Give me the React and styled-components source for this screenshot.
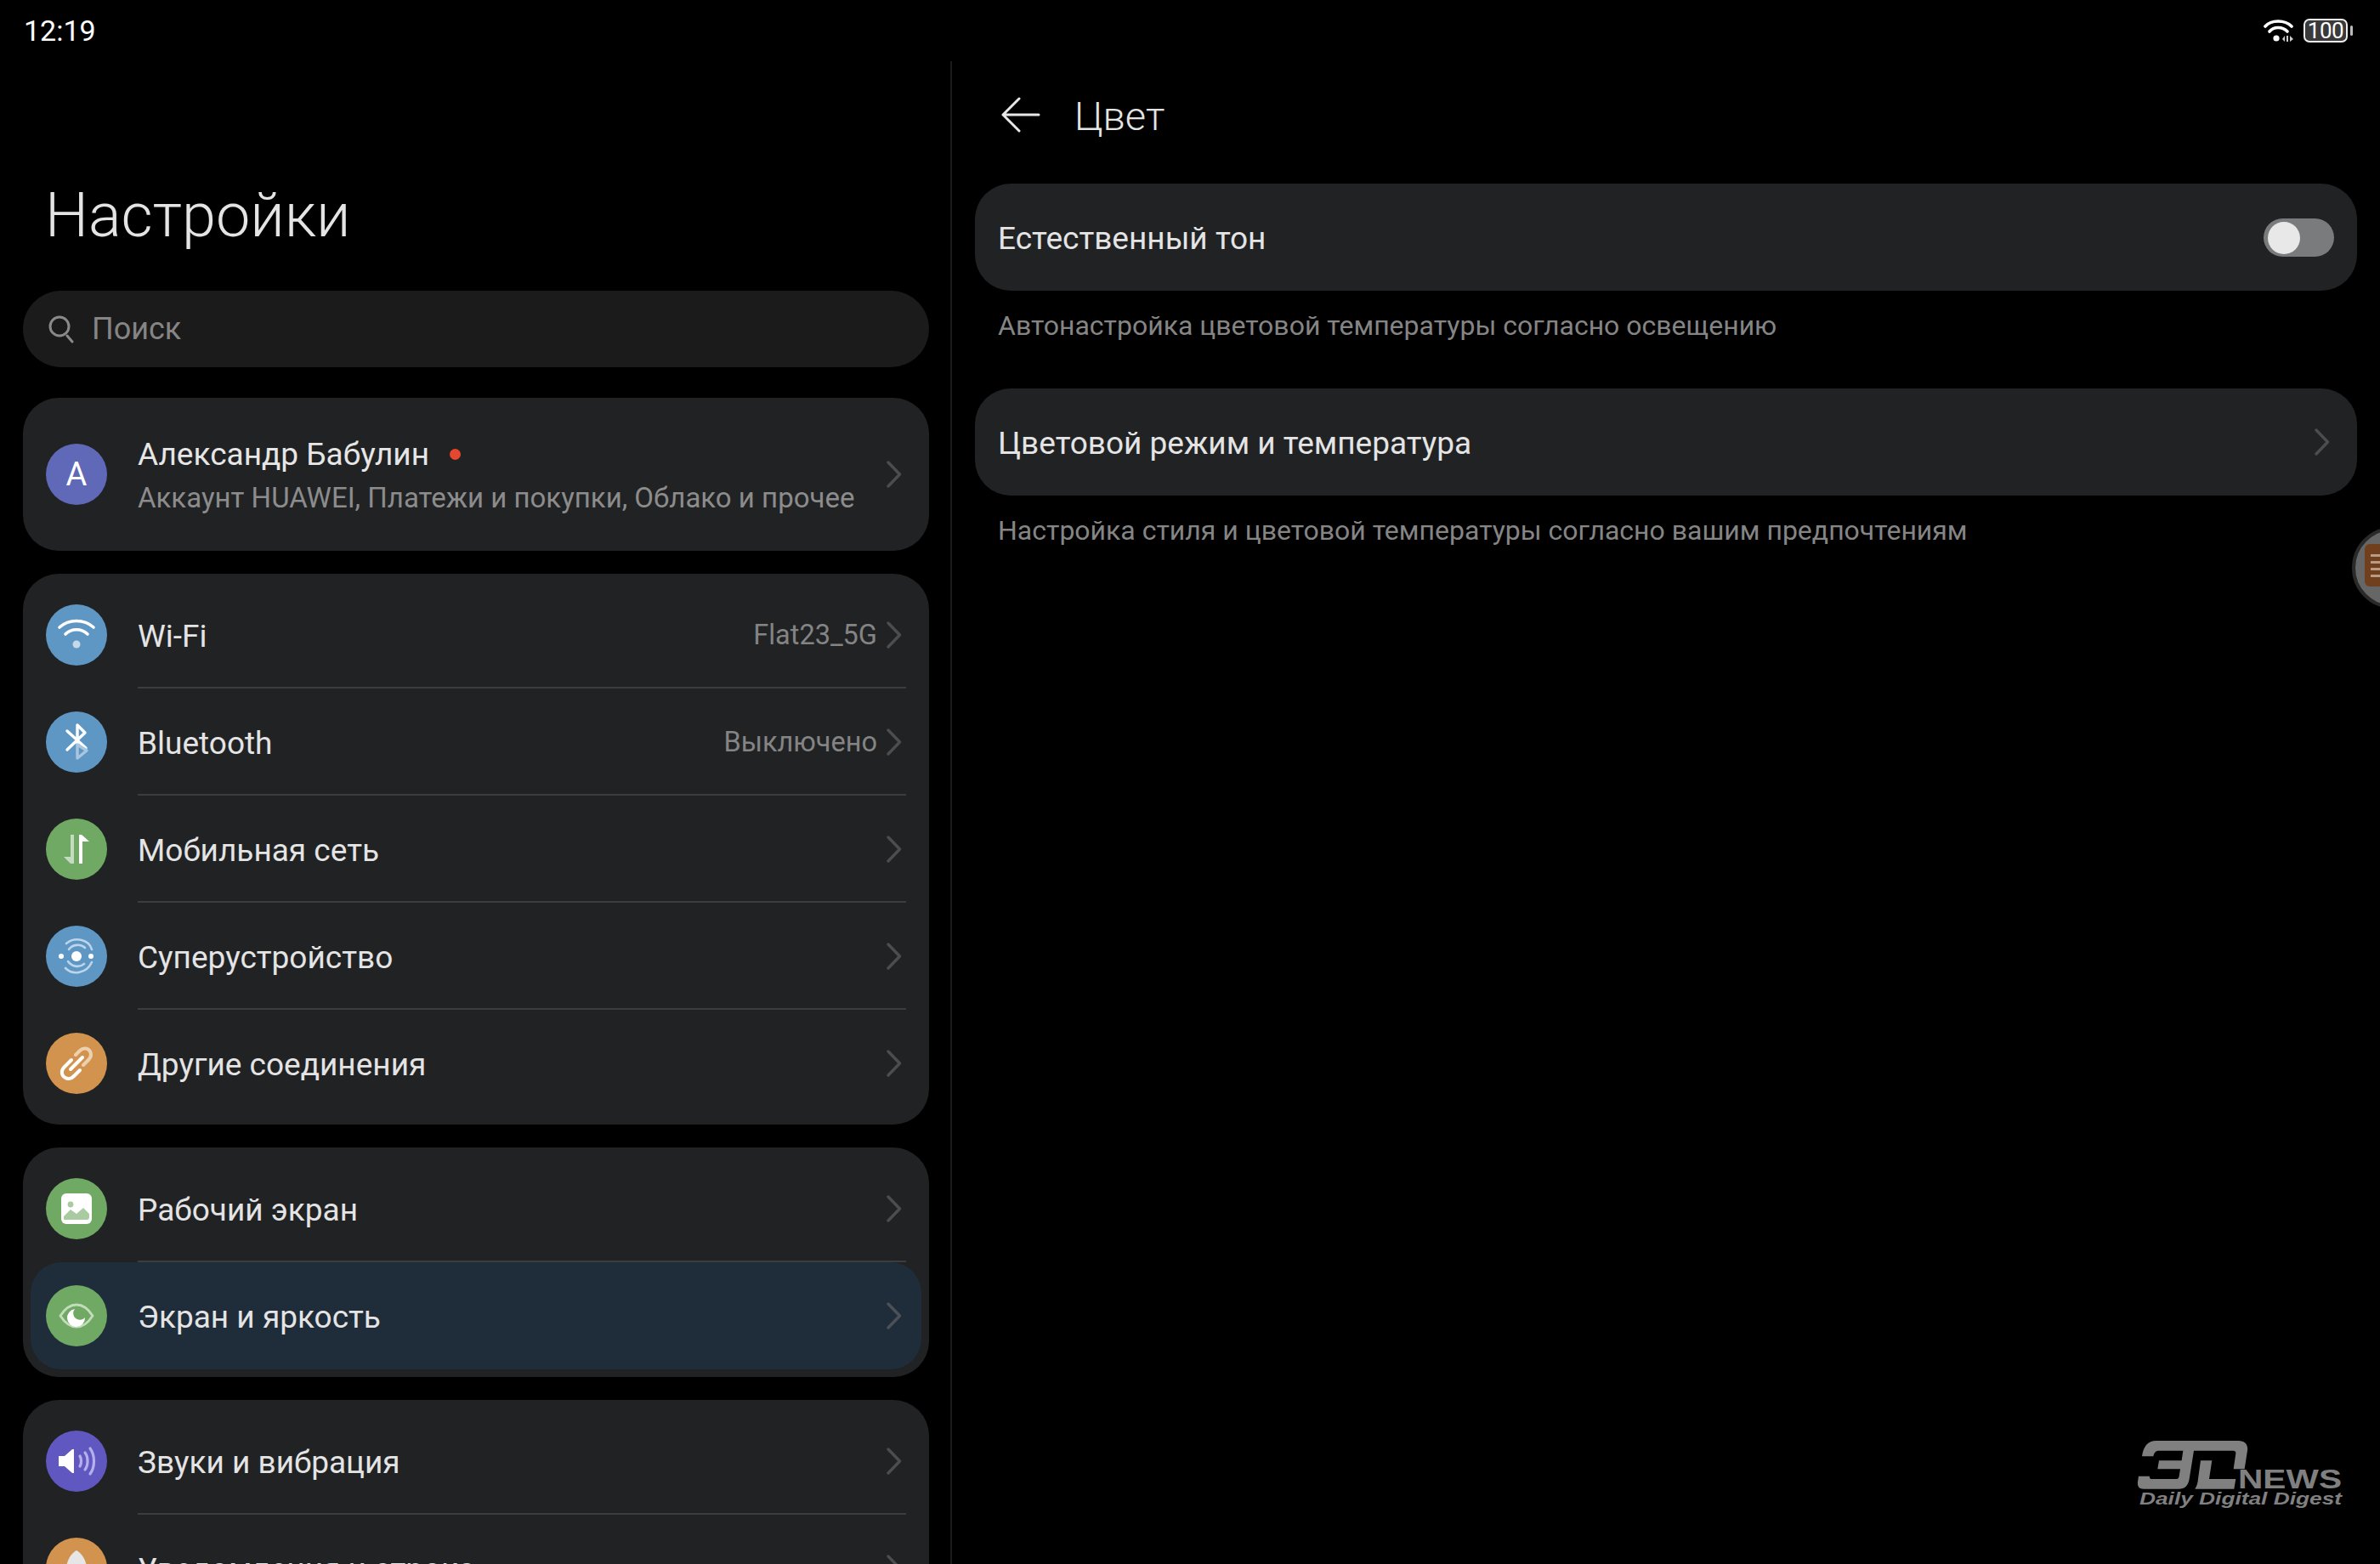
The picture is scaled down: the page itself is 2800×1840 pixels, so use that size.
import React from "react";
import styled, { createGlobalStyle } from "styled-components";

const GlobalStyle = createGlobalStyle`
    html, body {
        margin: 0;
        background: #000;
    }
    * {
        box-sizing: border-box;
    }
`;

const Page = styled.div`
    width: 2800px;
    height: 1840px;
    position: relative;
    overflow: hidden;
    background: #000;
    color: #e6e6e6;
    font-family: Roboto, "Noto Sans", sans-serif;
    display: flex;
    flex-direction: column;
`;

const StatusBar = styled.div`
    height: 72px;
    flex: none;
    padding: 0 38px 0 28px;
    display: flex;
    align-items: center;
    justify-content: space-between;
`;

const Clock = styled.span`
    font-size: 34px;
    color: #fff;
`;

const StatusIcons = styled.div`
    display: flex;
    align-items: center;
    gap: 11px;
`;

const Battery = styled.div`
    width: 52px;
    height: 28px;
    border: 2px solid #eee;
    border-radius: 7px;
    background: #3a3a3a;
    color: #fff;
    font-size: 26px;
    line-height: 24px;
    text-align: center;
    letter-spacing: -0.5px;
    position: relative;
    &::after {
        content: "";
        position: absolute;
        right: -8px;
        top: 6px;
        width: 3px;
        height: 12px;
        border-radius: 2px;
        background: #bbb;
    }
`;

const Columns = styled.div`
    flex: 1;
    display: flex;
    min-height: 0;
`;

const LeftColumn = styled.div`
    width: 1120px;
    flex: none;
    padding: 0 25px 0 27px;
    border-right: 2px solid #1c1c1c;
`;

const RightColumn = styled.div`
    flex: 1;
    padding: 0 27px;
`;

const BigTitle = styled.h1`
    margin: 0;
    height: 270px;
    padding: 142px 0 0 26px;
    font-size: 72px;
    line-height: 80px;
    font-weight: 300;
    color: #e4e4e4;
`;

const SearchBox = styled.div`
    height: 90px;
    border-radius: 45px;
    background: #1b1b1b;
    display: flex;
    align-items: center;
    gap: 20px;
    padding: 0 29px;
    margin-bottom: 36px;
    color: #858585;
    font-size: 36px;
`;

const Group = styled.div`
    background: #212224;
    border-radius: 42px;
    padding: 9px 0;
    margin-bottom: 27px;
`;

const AccountRow = styled.div`
    height: 180px;
    margin: -9px 0;
    display: flex;
    align-items: center;
    padding: 0 32px 0 27px;
`;

const AccountText = styled.div`
    flex: 1;
    margin-left: 36px;
    display: flex;
    flex-direction: column;
    gap: 6px;
    padding-top: 3px;
`;

const Name = styled.div`
    font-size: 37px;
    line-height: 46px;
    display: flex;
    align-items: center;
    gap: 24px;
`;

const RedDot = styled.span`
    width: 13px;
    height: 13px;
    border-radius: 50%;
    background: #e8472f;
`;

const SubText = styled.div`
    font-size: 33px;
    line-height: 44px;
    color: #8c8c8c;
`;

const Row = styled.div`
    height: 126px;
    position: relative;
    display: flex;
    align-items: center;
    padding: 0 32px 0 27px;
    ${({ $active }) => $active && `
        background: #1f2c3a;
        border-radius: 36px;
        margin: 0 9px;
        padding: 0 23px 0 18px;
    `}
    ${({ $divider, $active }) => $divider && `
        &::after {
            content: "";
            position: absolute;
            left: ${$active ? 126 : 135}px;
            right: ${$active ? 18 : 27}px;
            bottom: 0;
            height: 2px;
            background: #3c3d3f;
        }
    `}
`;

const IconCircle = styled.div`
    width: 72px;
    height: 72px;
    flex: none;
    border-radius: 50%;
    background: ${({ $color }) => $color};
    display: flex;
    align-items: center;
    justify-content: center;
    color: #fff;
    font-size: 38px;
    svg {
        display: block;
    }
`;

const RowLabel = styled.div`
    flex: 1;
    margin-left: 36px;
    padding-top: 2px;
    font-size: 37px;
    color: #e4e4e4;
    white-space: nowrap;
`;

const RowValue = styled.div`
    font-size: 32.5px;
    color: #848484;
    margin-right: 11px;
`;

const Header = styled.div`
    height: 126px;
    margin-bottom: 18px;
    display: flex;
    align-items: center;
    padding-left: 31px;
    gap: 40px;
`;

const HeaderTitle = styled.h2`
    margin: 0;
    padding-top: 2px;
    font-size: 47px;
    font-weight: 300;
    color: #e4e4e4;
`;

const Card = styled.div`
    height: 126px;
    background: #212224;
    border-radius: 42px;
    display: flex;
    align-items: center;
    justify-content: space-between;
    padding: 0 27px;
    font-size: 37px;
    color: #e4e4e4;
`;

const CardLabel = styled.span`
    padding-top: 2px;
`;

const CardChevron = styled.span`
    display: flex;
    margin-right: 5px;
`;

const Note = styled.div`
    height: 115px;
    padding: 19px 0 0 27px;
    font-size: 32px;
    line-height: 44px;
    color: #858585;
`;

const Toggle = styled.div`
    width: 83px;
    height: 45px;
    border-radius: 23px;
    background: #7a7b7c;
    padding: 4px 5px;
    &::before {
        content: "";
        display: block;
        width: 38px;
        height: 38px;
        border-radius: 50%;
        background: #e8e8e8;
    }
`;

const FloatingHandle = styled.div`
    position: absolute;
    left: 2767px;
    top: 620px;
    width: 96px;
    height: 96px;
    border-radius: 50%;
    background: #666;
    border: 4px solid #2a2a2a;
    padding: 16px 0 0 11px;
`;

const HandleCard = styled.div`
    width: 60px;
    height: 50px;
    border-radius: 6px;
    background: #70401e;
    display: flex;
    flex-direction: column;
    justify-content: center;
    gap: 5px;
    padding-left: 7px;
    span {
        height: 3px;
        background: #b79b85;
    }
`;

const Watermark = styled.svg`
    position: absolute;
    left: 2510px;
    top: 1690px;
`;

const Chevron = ({ dark }) => (
    <svg width="18" height="32" viewBox="0 0 18 32" fill="none">
        <path d="M2 2 L15.5 16 L2 30" stroke={dark ? "#4b5058" : "#4c4d4f"} strokeWidth="3.4" strokeLinecap="round" strokeLinejoin="round" />
    </svg>
);

const SearchIcon = () => (
    <svg width="32" height="34" viewBox="0 0 32 34" fill="none" stroke="#8a8a8a" strokeWidth="3">
        <circle cx="14" cy="14" r="11" />
        <path d="M23 25 L29 32" strokeLinecap="round" />
    </svg>
);

const WifiIcon = () => (
    <svg width="46" height="46" viewBox="0 0 46 46" fill="none" stroke="#fff" strokeWidth="3.6" strokeLinecap="round">
        <path d="M3 14 C14 4 32 4 43 14" />
        <path d="M10 22 C17 15 29 15 36 22" />
        <circle cx="23" cy="34" r="4.5" fill="#c5d9ea" stroke="none" />
    </svg>
);

const BluetoothIcon = () => (
    <svg width="34" height="46" viewBox="0 0 34 46" fill="none" strokeLinecap="round" strokeLinejoin="round">
        <path d="M4 10 L26 30 M4 32 L25 12 L16 3 L16 24" stroke="#fff" strokeWidth="3.4" transform="translate(2 0)" />
        <path d="M18 26 L18 42 L29 33 Z" stroke="#a9c6e0" strokeWidth="3.4" />
    </svg>
);

const MobileIcon = () => (
    <svg width="34" height="38" viewBox="0 0 34 38">
        <path d="M10 2 L14 2 L14 36 L10 36 L2 28 L10 28 Z" fill="#c6dcc0" />
        <path d="M20 36 L20 2 L23 2 L32 10 L24 10 L24 36 Z" fill="#fff" />
    </svg>
);

const SuperDeviceIcon = () => (
    <svg width="46" height="46" viewBox="0 0 46 46" fill="none" stroke="#bcd5ea" strokeWidth="2.6" strokeLinecap="round">
        <path d="M11 8 C22 -1 38 4 41 15 M41 30 C35 43 19 46 10 37" />
        <path d="M14 15 C18 9 28 8 33 13 M32 32 C26 37 17 35 13 29" />
        <circle cx="23" cy="23" r="6" fill="#fff" stroke="none" />
        <circle cx="5" cy="23" r="3" fill="#fff" stroke="none" />
        <circle cx="40" cy="23" r="3" fill="#fff" stroke="none" />
    </svg>
);

const LinkIcon = () => (
    <svg width="42" height="42" viewBox="0 0 42 42" fill="none" strokeWidth="4" strokeLinecap="round" strokeLinejoin="round">
        <path d="M15 17 L6 26 C2 31 4 36 8 38 C11 40 15 39 18 36 L25 29" stroke="#fff" />
        <path d="M14 28 L28 14" stroke="#fff" />
        <path d="M20 11 L25 6 C29 2 35 3 37 7 C39 11 38 14 35 17 L29 23" stroke="#edd0ae" />
    </svg>
);

const PictureIcon = () => (
    <svg width="36" height="36" viewBox="0 0 36 36">
        <rect width="36" height="36" rx="6" fill="#fff" />
        <circle cx="11" cy="13" r="3.4" fill="#a9cba0" />
        <path d="M3 30 L3 27 L11 19 L18 24 L26 17 L33 24 L33 28 C33 30 32 31 30 31 L6 31 C4 31 3 31 3 30 Z" fill="#a9cba0" />
    </svg>
);

const EyeIcon = () => (
    <svg width="42" height="30" viewBox="0 0 42 30" fill="none">
        <path d="M2 15 C9 4 16 2 21 2 C26 2 33 4 40 15 C33 26 26 28 21 28 C16 28 9 26 2 15 Z" stroke="#c3dcbc" strokeWidth="2.8" />
        <path d="M19 5 a10.5 10.5 0 1 0 12 10 a6.5 6.5 0 0 1 -12 -10 Z" fill="#fff" transform="translate(0 2)" />
    </svg>
);

const SoundIcon = () => (
    <svg width="46" height="36" viewBox="0 0 46 36" fill="none">
        <path d="M2 12 L9 12 L18 4 L20 4 L20 32 L18 32 L9 24 L2 24 Z" fill="#fff" strokeLinejoin="round" />
        <path d="M27 12 C29 15 29 21 27 24 M33 8 C37 13 37 23 33 28 M39 3 C45 11 45 25 39 33" stroke="#b5b0ec" strokeWidth="3.2" strokeLinecap="round" />
    </svg>
);

const BellIcon = () => (
    <svg width="36" height="46" viewBox="0 0 36 46">
        <path d="M18 2 C22 4 30 12 30 24 L30 36 L6 36 L6 24 C6 12 14 4 18 2 Z" fill="#e6e6e6" />
    </svg>
);

const BackArrow = () => (
    <svg width="46" height="42" viewBox="0 0 46 42" fill="none" stroke="#e8e8e8" strokeWidth="3" strokeLinecap="round" strokeLinejoin="round">
        <path d="M21 2 L2 21 L21 40 M2 21 L44 21" />
    </svg>
);

const StatusWifi = () => (
    <svg width="36" height="28" viewBox="0 0 36 28" fill="none" stroke="#fff" strokeWidth="3.6" strokeLinecap="round">
        <path d="M2 9 C9 1 25 1 33 9" />
        <path d="M7 15 C12 9 22 9 28 15" />
        <circle cx="15" cy="23" r="3.6" fill="#fff" stroke="none" />
        <path d="M25 20 L22 24 L25 27 Z M27 20 L29 20 L29 27 L27 27 Z M31 20 L35 24 L31 27 Z" fill="#ccc" stroke="none" />
    </svg>
);

const networkRows = [
    { label: "Wi-Fi", value: "Flat23_5G", color: "#5f97c4", icon: <WifiIcon /> },
    { label: "Bluetooth", value: "Выключено", color: "#5f97c4", icon: <BluetoothIcon /> },
    { label: "Мобильная сеть", color: "#6fa963", icon: <MobileIcon /> },
    { label: "Суперустройство", color: "#5f97c4", icon: <SuperDeviceIcon /> },
    { label: "Другие соединения", color: "#d2934e", icon: <LinkIcon /> },
];

const SettingRow = ({ row, divider, active }) => (
    <Row $divider={divider} $active={active}>
        <IconCircle $color={row.color}>{row.icon}</IconCircle>
        <RowLabel>{row.label}</RowLabel>
        {row.value && <RowValue>{row.value}</RowValue>}
        <Chevron dark={active} />
    </Row>
);

export default function App() {
    return (
        <Page>
            <GlobalStyle />
            <StatusBar>
                <Clock>12:19</Clock>
                <StatusIcons>
                    <StatusWifi />
                    <Battery>100</Battery>
                </StatusIcons>
            </StatusBar>
            <Columns>
                <LeftColumn>
                    <BigTitle>Настройки</BigTitle>
                    <SearchBox>
                        <SearchIcon />
                        Поиск
                    </SearchBox>
                    <Group>
                        <AccountRow>
                            <IconCircle $color="#6068b8">А</IconCircle>
                            <AccountText>
                                <Name>Александр Бабулин <RedDot /></Name>
                                <SubText>Аккаунт HUAWEI, Платежи и покупки, Облако и прочее</SubText>
                            </AccountText>
                            <Chevron />
                        </AccountRow>
                    </Group>
                    <Group>
                        {networkRows.map((row, i) => (
                            <SettingRow key={row.label} row={row} divider={i < networkRows.length - 1} />
                        ))}
                    </Group>
                    <Group>
                        <SettingRow row={{ label: "Рабочий экран", color: "#6fa963", icon: <PictureIcon /> }} divider />
                        <SettingRow row={{ label: "Экран и яркость", color: "#6fa963", icon: <EyeIcon /> }} active />
                    </Group>
                    <Group>
                        <SettingRow row={{ label: "Звуки и вибрация", color: "#6058c0", icon: <SoundIcon /> }} divider />
                        <SettingRow row={{ label: "Уведомления и строка", color: "#d2934e", icon: <BellIcon /> }} />
                    </Group>
                </LeftColumn>
                <RightColumn>
                    <Header>
                        <BackArrow />
                        <HeaderTitle>Цвет</HeaderTitle>
                    </Header>
                    <Card>
                        <CardLabel>Естественный тон</CardLabel>
                        <Toggle />
                    </Card>
                    <Note>Автонастройка цветовой температуры согласно освещению</Note>
                    <Card>
                        <CardLabel>Цветовой режим и температура</CardLabel>
                        <CardChevron><Chevron /></CardChevron>
                    </Card>
                    <Note>Настройка стиля и цветовой температуры согласно вашим предпочтениям</Note>
                </RightColumn>
            </Columns>
            <FloatingHandle>
                <HandleCard>
                    <span />
                    <span />
                    <span />
                    <span />
                </HandleCard>
            </FloatingHandle>
            <Watermark width="250" height="90" viewBox="0 0 250 90" fill="none">
                <g transform="translate(-5 -5) scale(0.3333)" fill="#808080">
                    <path d="M45,85 C50,50 65,30 95,30 L385,30 C410,30 420,45 417,65 L407,130 L368,130 L376,75 C377,68 373,65 368,65 L228,65 L212,165 C208,190 195,200 175,200 L50,200 C35,200 28,190 30,175 L33,155 L72,155 C70,162 75,165 80,165 L165,165 C172,165 175,162 176,155 L180,130 L100,130 L105,100 L185,100 L190,65 L105,65 C95,65 88,70 85,85 Z" />
                    <path d="M252,100 L292,100 L282,165 L376,165 L370,200 L232,200 C238,190 242,180 243,165 Z" />
                </g>
                <text x="123" y="61" fontFamily="Liberation Sans, sans-serif" fontSize="32" fontWeight="700" fill="#808080" textLength="122" lengthAdjust="spacingAndGlyphs">NEWS</text>
                <text x="7" y="80" fontFamily="Liberation Sans, sans-serif" fontSize="20" fontStyle="italic" fontWeight="700" fill="#808080" textLength="238" lengthAdjust="spacingAndGlyphs">Daily Digital Digest</text>
            </Watermark>
        </Page>
    );
}
